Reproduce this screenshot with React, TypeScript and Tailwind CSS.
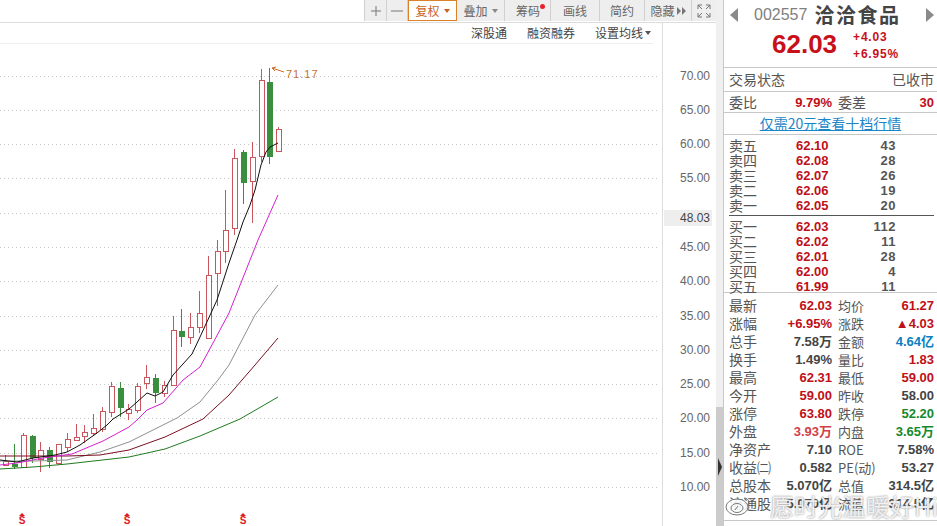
const cjk = "font-['Noto_Sans_CJK_SC','Liberation_Sans',sans-serif]";
const num = "font-['Liberation_Sans','Noto_Sans_CJK_SC',sans-serif] font-bold";

// x, body top, body bottom, wick top, wick bottom
const upCandles = [
  [5.5, 461, 465, 455, 466],
  [23.5, 435, 467, 433, 468],
  [40.5, 450, 459, 442, 472],
  [58.5, 444, 463, 444, 465],
  [67.5, 439, 447, 433, 452],
  [76.5, 437, 440, 424, 441],
  [84.5, 432, 436, 425, 443],
  [93.5, 428, 433, 414, 436],
  [102.5, 411, 429, 407, 432],
  [111.5, 386, 412, 382, 417],
  [128.5, 409, 413, 404, 420],
  [137.5, 386, 410, 383, 413],
  [146.5, 377, 383, 365, 389],
  [164.5, 385, 393, 381, 397],
  [173.5, 330, 385, 316, 385],
  [190.5, 327, 337, 313, 344],
  [199.5, 313, 327, 291, 333],
  [208.5, 275, 338, 256, 338],
  [217.5, 251, 273, 240, 306],
  [225.5, 230, 251, 190, 263],
  [234.5, 158, 228, 149, 235],
  [252.5, 157, 181, 142, 223],
  [261.5, 80, 156, 69, 162],
  [278.5, 129, 151, 127, 151],
];
const downCandles = [
  [14.5, 464, 467, 444, 469],
  [32.5, 436, 458, 435, 463],
  [49.5, 450, 462, 447, 468],
  [120.5, 388, 408, 382, 417],
  [155.5, 378, 393, 374, 403],
  [181.5, 331, 337, 309, 347],
  [243.5, 152, 183, 150, 204],
  [269.5, 82, 157, 68, 164],
];

const maLines = [
  { color: "#8f8f8f", d: "0,461 33,461 67,460 100,452 129,442 177,418 200,402 218,380 229,365 255,315 278,285" },
  { color: "#7a1020", d: "0,456 67,456 100,455 129,450 165,437 203,419 229,395 255,365 278,338" },
  { color: "#1f7a1f", d: "0,469 33,467 67,464 129,457 165,449 200,436 240,419 278,397" },
  { color: "#d61fd0", d: "0,465 17,463 43,458 72,454 103,441 129,427 137,420 147,410 163,403 183,380 200,367 213,343 229,313 258,240 278,195" },
  { color: "#111111", d: "0,460 17,462 33,458 55,455 67,452 80,445 97,433 107,425 113,419 129,409 137,402 147,393 155,396 163,392 173,375 192,354 200,337 217,300 229,263 237,240 243,222 250,205 255,190 261,165 266,152 270,147 278,143" },
];

const gridYs = [76.5, 110.5, 144.5, 178.5, 213.5, 247.5, 281.5, 316.5, 350.5, 384.5, 418.5, 453.5, 487.5];
const axis = [
  ["70.00", 80],
  ["65.00", 114],
  ["60.00", 148],
  ["55.00", 182],
  ["45.00", 251],
  ["40.00", 285],
  ["35.00", 320],
  ["30.00", 354],
  ["25.00", 388],
  ["20.00", 422],
  ["15.00", 457],
  ["10.00", 491],
] as const;

const sells = [
  ["卖五", "62.10", "43"],
  ["卖四", "62.08", "28"],
  ["卖三", "62.07", "26"],
  ["卖二", "62.06", "19"],
  ["卖一", "62.05", "20"],
];
const buys = [
  ["买一", "62.03", "112"],
  ["买二", "62.02", "11"],
  ["买三", "62.01", "28"],
  ["买四", "62.00", "4"],
  ["买五", "61.99", "11"],
];

const RED = "text-[#c00f18]";
const GREY = "text-[#444]";
const GREEN = "text-[#14892c]";
const stats = [
  ["最新", "62.03", RED, "均价", "61.27", RED],
  ["涨幅", "+6.95%", RED, "涨跌", "▲4.03", RED],
  ["总手", "7.58万", GREY, "金额", "4.64亿", "text-[#0a7fc0]"],
  ["换手", "1.49%", GREY, "量比", "1.83", RED],
  ["最高", "62.31", RED, "最低", "59.00", RED],
  ["今开", "59.00", RED, "昨收", "58.00", GREY],
  ["涨停", "63.80", RED, "跌停", "52.20", GREEN],
  ["外盘", "3.93万", "text-[#d0404a]", "内盘", "3.65万", GREEN],
  ["净资产", "7.10", GREY, "ROE", "7.58%", GREY],
  ["收益㈡", "0.582", GREY, "PE(动)", "53.27", GREY],
  ["总股本", "5.070亿", GREY, "总值", "314.5亿", GREY],
  ["流通股", "5.070亿", GREY, "流值", "314.5亿", GREY],
];

function Caret({ color = "border-t-[#666]" }: { color?: string }) {
  return <span className={`ml-1 inline-block border-x-[3px] border-t-[4px] border-x-transparent ${color}`} />;
}

function ToolButton({ label, w, caret }: { label: string; w: string; caret?: boolean }) {
  return (
    <div className={`${w} relative flex h-full items-center justify-center border-r border-[#d0d0d0] text-[12px] text-[#666]`}>
      {label}
      {caret && <Caret color="border-t-[#888]" />}
    </div>
  );
}

function Toolbar() {
  return (
    <div className={`flex h-[23px] justify-end border-b border-[#dcdcdc] ${cjk}`}>
      <div className="flex h-[21px] w-[352px] border-l border-[#d0d0d0] bg-[#eeeeee]">
        <div className="flex h-full w-[22px] items-center justify-center border-r border-[#d0d0d0]">
          <svg width="12" height="12" viewBox="0 0 12 12" stroke="#777" strokeWidth="1">
            <path d="M6 1v10M1 6h10" />
          </svg>
        </div>
        <div className="flex h-full w-[21px] items-center justify-center border-r border-[#d0d0d0]">
          <svg width="12" height="12" viewBox="0 0 12 12" stroke="#777" strokeWidth="1">
            <path d="M0 6h12" />
          </svg>
        </div>
        <div className="flex h-full w-[49px] items-center justify-center border border-[#d9822b] bg-white text-[12px] text-[#c8641e]">
          复权
          <Caret color="border-t-[#c8641e]" />
        </div>
        <ToolButton label="叠加" w="w-[48px]" caret />
        <div className="relative flex h-full w-[46px] items-center border-r border-[#d0d0d0] pl-[11px] text-[12px] text-[#666]">
          筹码
          <span className="absolute right-[5px] top-[4px] h-[5px] w-[5px] rounded-full bg-[#e8202a]" />
        </div>
        <ToolButton label="画线" w="w-[49px]" />
        <ToolButton label="简约" w="w-[45px]" />
        <div className="flex h-full w-[47px] items-center justify-center gap-[2px] border-r border-[#d0d0d0] text-[12px] text-[#666]">
          隐藏
          <svg width="9" height="8" viewBox="0 0 9 8" fill="#777">
            <path d="M0 0l4 4-4 4zM5 0l4 4-4 4z" />
          </svg>
        </div>
        <div className="flex h-full flex-1 items-center justify-center">
          <svg width="14" height="14" viewBox="0 0 14 14" fill="none" stroke="#777" strokeWidth="1">
            <path d="M1 5V1h4M1 1l4 4M13 5V1H9M13 1L9 5M1 9v4h4M1 13l4-4M13 9v4H9M13 13L9 9" />
          </svg>
        </div>
      </div>
    </div>
  );
}

function SubBar() {
  return (
    <div className="h-[21px] w-[663px] border-r border-[#dcdcdc]">
      <div className={`flex h-[21px] w-[653px] items-center justify-end border-b border-[#eeeeee] pr-[2px] text-[12px] text-[#444] ${cjk}`}>
        <span className="mr-[20px]">深股通</span>
        <span className="mr-[20px]">融资融券</span>
        <span>设置均线</span>
        <span className="-ml-[2px] flex">
          <Caret color="border-t-[#555]" />
        </span>
      </div>
    </div>
  );
}

function Chart() {
  return (
    <svg className="block" width="716" height="482" viewBox="0 44 716 482">
      <line x1="662.5" y1="44" x2="662.5" y2="526" stroke="#dcdcdc" />
      {gridYs.map((y) => (
        <line key={y} x1="0" y1={y} x2="660" y2={y} stroke="#c8c8c8" strokeDasharray="1 3" />
      ))}
      {axis.map(([label, y]) => (
        <text key={label} x="680" y={y} fontFamily="Liberation Sans" fontSize="12" fill="#666">
          {label}
        </text>
      ))}
      <rect x="664" y="210" width="48" height="16" fill="#eeeeee" />
      <text x="680" y="222" fontFamily="Liberation Sans" fontSize="12" fill="#444">48.03</text>

      {upCandles.map(([x, top, bottom, wickTop, wickBottom]) => (
        <g key={x} stroke="#c9565c">
          <line x1={x} y1={wickTop} x2={x} y2={top} />
          <line x1={x} y1={bottom} x2={x} y2={wickBottom} />
          <rect x={x - 2} y={top + 0.5} width="5" height={bottom - top} fill="#ffffff" />
        </g>
      ))}
      {downCandles.map(([x, top, bottom, wickTop, wickBottom]) => (
        <g key={x}>
          <line x1={x} y1={wickTop} x2={x} y2={wickBottom} stroke="#3a8f3f" />
          <rect x={x - 2.5} y={top} width="6" height={bottom - top} fill="#3a8f3f" />
        </g>
      ))}

      {maLines.map((l) => (
        <polyline key={l.color} points={l.d} fill="none" stroke={l.color} strokeWidth="1" />
      ))}

      <path d="M272 68l12 4M272 68l4 -1M272 68l3 3" stroke="#c8702a" fill="none" />
      <text x="286" y="78" fontFamily="Liberation Sans" fontSize="11" letterSpacing="1" fill="#c8702a">71.17</text>

      {[22, 127, 243].map((x) => (
        <g key={x}>
          <path d={`M${x - 3} 516l3 -3 3 3z`} fill="#e01a22" />
          <text x={x} y="524" textAnchor="middle" fontFamily="Liberation Sans" fontWeight="bold" fontSize="10" fill="#e01a22">S</text>
        </g>
      ))}
    </svg>
  );
}

function Scrollbar() {
  return (
    <div className="relative flex h-full w-[7px] flex-col">
      <div className="h-[407px] bg-[#f0f0f0]" />
      <div className="flex-1 bg-[#cccccc]" />
      <svg className="absolute left-[2px] top-[458px]" width="4" height="18" viewBox="0 0 4 18" fill="#333">
        <path d="M0 0l4 9-4 9z" />
      </svg>
    </div>
  );
}

function Header() {
  return (
    <div className="h-[68px] border-b border-[#c8c8c8]">
      <div className={`flex h-[30px] items-center ${cjk}`}>
        <svg className="ml-[6px]" width="8" height="14" viewBox="0 0 8 14" fill="#8a8a8a">
          <path d="M8 0L0 7l8 7z" />
        </svg>
        <span className="ml-[16px] font-['Liberation_Sans'] text-[16px] text-[#808080]">002557</span>
        <span className="ml-[7px] text-[20px] font-bold tracking-[1.5px] text-[#444]">洽洽食品</span>
        <svg className="ml-auto mr-[3px]" width="8" height="14" viewBox="0 0 8 14" fill="#8a8a8a">
          <path d="M0 0l8 7-8 7z" />
        </svg>
      </div>
      <div className="flex h-[28px] items-center pl-[48px]">
        <span className={`${num} text-[26px] leading-none text-[#c8101a]`}>62.03</span>
        <div className={`${num} ml-[16px] pt-[3px] text-[12px] leading-[17px] tracking-[0.8px] text-[#c8101a]`}>
          <div>+4.03</div>
          <div>+6.95%</div>
        </div>
      </div>
    </div>
  );
}

function Quote({ rows }: { rows: string[][] }) {
  return (
    <div className="flex flex-col">
      {rows.map(([name, price, vol]) => (
        <div key={name} className="grid h-[15px] grid-cols-[67px_34px_66px] items-center">
          <span className={`${cjk} text-[14px] leading-[15px] text-[#555]`}>{name}</span>
          <span className={`${num} text-[13px] text-[#c00f18]`}>{price}</span>
          <span className={`${num} text-right text-[13px] tracking-[0.5px] text-[#555]`}>{vol}</span>
        </div>
      ))}
    </div>
  );
}

function SidePanel() {
  return (
    <div className="h-full flex-1 border-l border-[#c8c8c8] bg-white">
      <Header />
      <div className={`flex h-[24px] items-center justify-between border-b border-[#c8c8c8] pl-[5px] pr-[3px] text-[14px] text-[#555] ${cjk}`}>
        <span>交易状态</span>
        <span>已收市</span>
      </div>
      <div className="grid h-[21px] grid-cols-[103px_1fr] items-center border-b border-[#c8c8c8] pl-[5px] pr-[3px]">
        <div className="flex items-center justify-between">
          <span className={`${cjk} text-[14px] text-[#555]`}>委比</span>
          <span className={`${num} text-[13px] text-[#c00f18]`}>9.79%</span>
        </div>
        <div className="flex items-center justify-between pl-[6px]">
          <span className={`${cjk} text-[14px] text-[#555]`}>委差</span>
          <span className={`${num} text-[13px] text-[#c00f18]`}>30</span>
        </div>
      </div>
      <div className={`flex h-[22px] items-center justify-center border-b border-[#c8c8c8] text-[14px] text-[#1a86c8] underline ${cjk}`}>
        仅需20元查看十档行情
      </div>
      <div className="flex flex-col pl-[5px] pr-[3px]">
        <div className="border-b border-[#555] pb-[4px] pt-[1px]">
          <Quote rows={sells} />
        </div>
        <div className="pt-[1px]">
          <Quote rows={buys} />
        </div>
      </div>
      <div className="border-b border-t border-[#c8c8c8] pb-[9px] pl-[5px] pr-[3px] pt-[2px]">
        {stats.map(([a, av, ac, b, bv, bc]) => (
          <div key={a} className="grid h-[18px] grid-cols-[103px_1fr] items-center">
            <div className="flex items-center justify-between">
              <span className={`${cjk} text-[14px] text-[#555]`}>{a}</span>
              <span className={`${num} text-[13px] ${ac}`}>{av}</span>
            </div>
            <div className="flex items-center justify-between pl-[6px]">
              <span className={`${cjk} text-[13px] text-[#555]`}>{b}</span>
              <span className={`${num} text-[13px] ${bc}`}>{bv}</span>
            </div>
          </div>
        ))}
      </div>
    </div>
  );
}

function Watermark() {
  return (
    <div className={`absolute left-[725px] top-[488px] flex h-[36px] items-center text-[24px] font-normal leading-none text-white/85 [text-shadow:0_0_2px_#777] ${cjk}`}>
      <svg width="26" height="20" viewBox="0 0 26 20" fill="#ffffffdd" stroke="#777" strokeWidth="1">
        <ellipse cx="12" cy="11" rx="11" ry="8" />
        <ellipse cx="12" cy="12" rx="6" ry="4.5" fill="none" />
        <path d="M10 14l3 -4" fill="none" />
        <path d="M19 2c3 0 5 2 5 5" fill="none" />
      </svg>
      <span className="ml-[19px] whitespace-nowrap">愿时光温暖好Hi</span>
    </div>
  );
}

export default function App() {
  return (
    <div className="relative flex h-[526px] w-[937px] overflow-hidden bg-white">
      <div className="h-full w-[716px] shrink-0">
        <Toolbar />
        <SubBar />
        <Chart />
      </div>
      <Scrollbar />
      <SidePanel />
      <Watermark />
    </div>
  );
}
